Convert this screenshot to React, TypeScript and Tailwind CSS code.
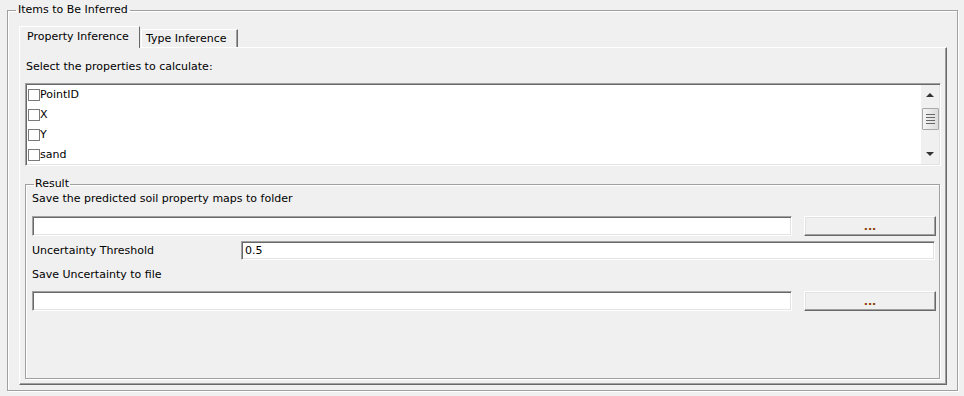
import React from "react";

const sunken =
  "border border-t-[#a0a0a0] border-l-[#a0a0a0] border-b-white border-r-white shadow-[inset_1px_1px_0_#696969,inset_-1px_-1px_0_#e3e3e3] bg-white";
const raised =
  "border border-t-white border-l-white border-b-[#696969] border-r-[#696969] shadow-[inset_-1px_-1px_0_#a0a0a0,inset_1px_1px_0_#e3e3e3] bg-[#f0f0f0]";

function Browse() {
  return (
    <button
      className={`${raised} w-[132px] h-[20px] flex items-end justify-center pb-[3px] text-[#8a3c00] font-bold leading-none text-[11px]`}
    >
      ...
    </button>
  );
}

function ScrollBar() {
  return (
    <div className="w-[18px] h-full bg-[#f0f0f0] flex flex-col items-center">
      {/* up arrow */}
      <div className="h-[20px] w-full flex items-center justify-center">
        <div className="w-0 h-0 border-l-[4px] border-r-[4px] border-b-[4px] border-l-transparent border-r-transparent border-b-[#333]" />
      </div>
      {/* thumb */}
      <div className="mt-[3px] w-[17px] h-[22px] border border-[#a9a9a9] rounded-[1px] bg-gradient-to-r from-[#f4f4f4] to-[#dcdcdc] flex flex-col items-center justify-center gap-[2px]">
        <div className="w-[9px] h-px bg-[#666]" />
        <div className="w-[9px] h-px bg-[#666]" />
        <div className="w-[9px] h-px bg-[#666]" />
        <div className="w-[9px] h-px bg-[#666]" />
      </div>
      <div className="flex-1" />
      {/* down arrow */}
      <div className="h-[20px] w-full flex items-center justify-center">
        <div className="w-0 h-0 border-l-[4px] border-r-[4px] border-t-[4px] border-l-transparent border-r-transparent border-t-[#333]" />
      </div>
    </div>
  );
}

export default function App() {
  const props = ["PointID", "X", "Y", "sand"];
  return (
    <div className="w-[964px] h-[396px] bg-[#f0f0f0] pt-[3px] pl-[7px] font-['DejaVu_Sans',sans-serif] text-[11px] text-black">
      {/* Items to Be Inferred */}
      <fieldset className="w-[951px] h-[388px] border border-[#a0a0a0] shadow-[inset_1px_1px_0_#fff,1px_1px_0_#fff] pl-[11px] pt-[8px]">
        <legend className="ml-[-3px] px-[2px] leading-[14px]">Items to Be Inferred</legend>

        <div className="w-[928px] flex flex-col">
          {/* tabs */}
          <div className="flex items-end h-[22px] relative z-10">
            <div className="h-[22px] w-[121px] -mb-px bg-[#f0f0f0] border-t border-l border-t-white border-l-white border-r border-r-[#696969] pl-[7px] pt-[3px] leading-[14px]">
              Property Inference
            </div>
            <div className="h-[18px] w-[97px] ml-px border-t border-l border-t-white border-l-white border-r border-r-[#696969] shadow-[inset_-1px_0_0_#a0a0a0] pl-[4px] pt-[2px] leading-[14px]">
              Type Inference
            </div>
          </div>

          {/* panel */}
          <div className="h-[338px] border border-t-white border-l-white border-r-[#696969] border-b-[#696969] shadow-[inset_-1px_-1px_0_#a0a0a0] pl-[5px] pr-[5px] pt-[12px]">
            <div className="leading-[14px] pl-[1px]">Select the properties to calculate:</div>

            {/* list box */}
            <div className={`${sunken} mt-[9px] w-[916px] h-[83px] flex p-px overflow-hidden`}>
              <div className="flex-1 flex flex-col">
                {props.map((p) => (
                  <div key={p} className="h-[20px] shrink-0 flex items-center pl-px">
                    <div className="w-[12px] h-[12px] border border-[#7a7a7a] bg-white" />
                    <span className="leading-[14px]">{p}</span>
                  </div>
                ))}
              </div>
              <ScrollBar />
            </div>

            {/* Result */}
            <fieldset className="mt-[11px] w-[915px] h-[202px] border border-[#a0a0a0] shadow-[inset_1px_1px_0_#fff,1px_1px_0_#fff] pl-[6px] pr-[3px] pt-[1px]">
              <legend className="ml-[2px] px-px leading-[14px]">Result</legend>

              <div className="leading-[14px]">Save the predicted soil property maps to folder</div>
              <div className="mt-[10px] flex items-center gap-[12px]">
                <div className={`${sunken} w-[760px] h-[20px]`} />
                <Browse />
              </div>

              <div className="mt-[5px] flex items-center">
                <div className="w-[209px] leading-[14px]">Uncertainty Threshold</div>
                <div className={`${sunken} w-[694px] h-[19px] flex items-center pl-[3px] leading-[14px]`}>0.5</div>
              </div>

              <div className="mt-[8px] leading-[14px]">Save Uncertainty to file</div>
              <div className="mt-[9px] flex items-center gap-[12px]">
                <div className={`${sunken} w-[760px] h-[20px]`} />
                <Browse />
              </div>
            </fieldset>
          </div>
        </div>
      </fieldset>
    </div>
  );
}
